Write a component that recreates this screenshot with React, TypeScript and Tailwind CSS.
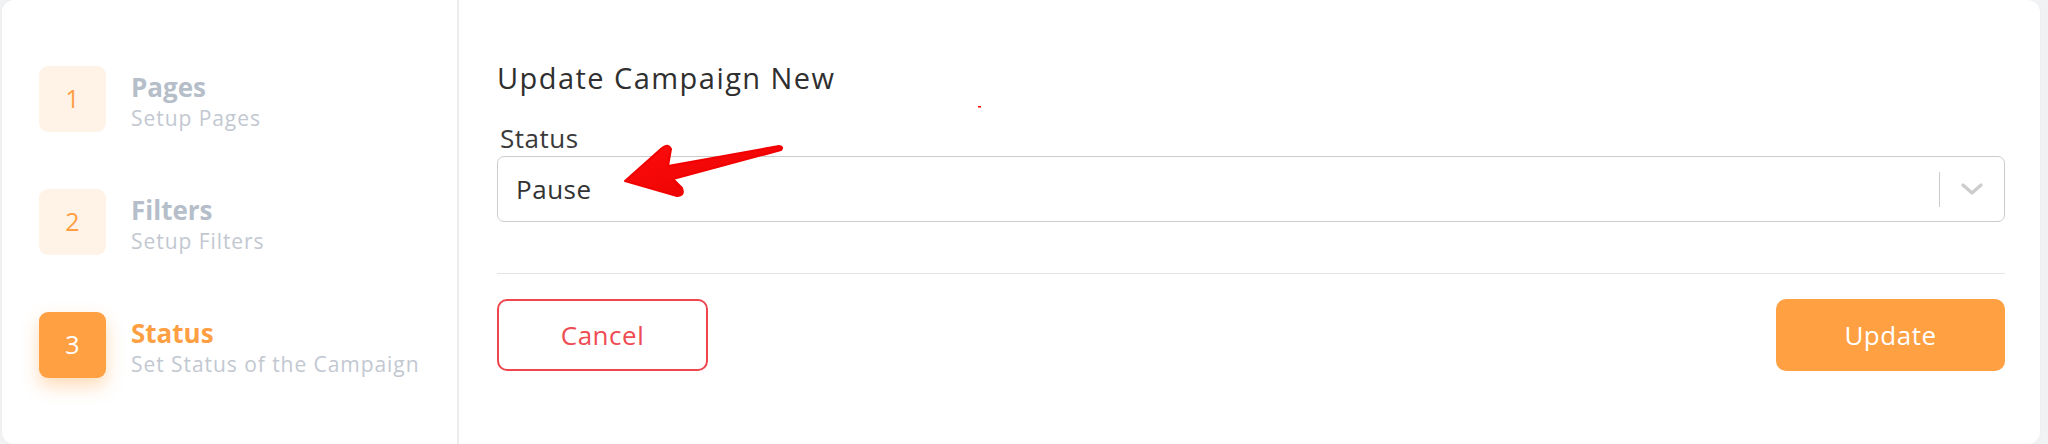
const steps = [
  { n: "1", title: "Pages", sub: "Setup Pages", active: false },
  { n: "2", title: "Filters", sub: "Setup Filters", active: false },
  { n: "3", title: "Status", sub: "Set Status of the Campaign", active: true },
]

function StepItem({ n, title, sub, active }: { n: string; title: string; sub: string; active: boolean }) {
  return (
    <div className="flex h-[66px] items-start gap-[25px]">
      <div
        className={
          active
            ? "flex h-[66px] w-[67px] shrink-0 items-center justify-center rounded-[9px] bg-[#ffa043] text-[25px] text-white shadow-[0_8px_18px_rgba(255,160,67,0.38)]"
            : "flex h-[66px] w-[67px] shrink-0 items-center justify-center rounded-[9px] bg-[#fff3e8] text-[25px] text-[#ff9f43]"
        }
      >
        {n}
      </div>
      <div className="pt-[6px]">
        <div
          className={
            active
              ? "text-[26px] font-bold leading-[30px] text-[#ff9f43]"
              : "text-[26px] font-bold leading-[30px] text-[#b5bec9]"
          }
        >
          {title}
        </div>
        <div className="mt-[3px] text-[21px] leading-[26px] tracking-[0.045em] text-[#c2c8d1]">{sub}</div>
      </div>
    </div>
  )
}

function StatusSelect() {
  return (
    <div className="mt-[3px] flex h-[66px] items-center rounded-[7px] border border-[#cccccc] bg-white">
      <div className="flex-1 pl-[18px] text-[26px] leading-[30px] tracking-[0.02em] text-[#333333]">Pause</div>
      <div className="h-[35px] w-px bg-[#cccccc]" />
      <div className="flex w-[64px] items-center justify-center">
        <svg width="22" height="14" viewBox="0 0 22 14" fill="none">
          <path d="M2 3 L11 11 L20 3" stroke="#cccccc" strokeWidth="3.2" strokeLinecap="round" strokeLinejoin="round" />
        </svg>
      </div>
    </div>
  )
}

export default function App() {
  return (
    <div
      className="relative h-[444px] w-[2048px] bg-[#f1f2f4] pl-[2px] pr-[8px]"
      style={{ fontFamily: '"Open Sans", "Noto Sans", sans-serif' }}
    >
      <div className="flex h-full rounded-[12px] bg-white shadow-[0_0_3px_rgba(0,0,0,0.04)]">
        <aside className="flex w-[457px] shrink-0 flex-col gap-[57px] border-r-2 border-[#ececec] pl-[37px] pt-[66px]">
          {steps.map(s => (
            <StepItem key={s.n} {...s} />
          ))}
        </aside>

        <main className="flex flex-1 flex-col pl-[38px] pr-[35px] pt-[61px]">
          <h2 className="text-[29px] font-medium leading-[34px] tracking-[0.05em] text-[#2f2f2f]">
            Update Campaign New
          </h2>
          <label className="mt-[28px] pl-[3px] text-[26px] leading-[30px] tracking-[0.02em] text-[#3a3a3a]">
            Status
          </label>
          <StatusSelect />
          <div className="mt-[51px] h-px bg-[#e4e4e4]" />
          <div className="mt-[25px] flex items-center justify-between">
            <button className="h-[72px] w-[211px] rounded-[10px] border-2 border-[#f0454d] bg-white text-[26px] tracking-[0.02em] text-[#ef4b52]">
              Cancel
            </button>
            <button className="h-[72px] w-[229px] rounded-[10px] bg-[#ffa043] text-[26px] tracking-[0.02em] text-white">
              Update
            </button>
          </div>
        </main>
      </div>

      {/* annotation arrow */}
      <svg className="pointer-events-none absolute left-0 top-0" width="2048" height="444" viewBox="0 0 2048 444">
        <defs>
          <linearGradient id="arrowFill" x1="0" y1="0" x2="1" y2="1">
            <stop offset="0" stopColor="#ff0d0d" />
            <stop offset="1" stopColor="#e60000" />
          </linearGradient>
        </defs>
        <path
          d="M625 181 L662 148 Q668 143 671 149 L668 166 L779 146 Q784 147 781 150 L673 179 L682 188 Q685 196 677 196 Z"
          fill="url(#arrowFill)"
          stroke="#f20000"
          strokeWidth="2"
          strokeLinejoin="round"
        />
        <rect x="978" y="106" width="3" height="1.5" fill="#ff0000" />
      </svg>
    </div>
  )
}
